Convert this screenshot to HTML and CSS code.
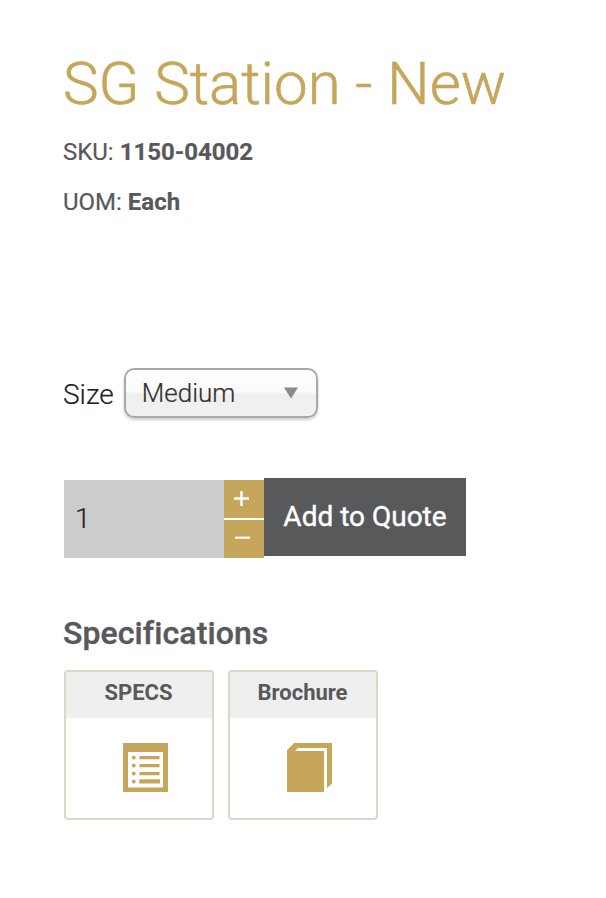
FILE: index.html
```html
<!DOCTYPE html>
<html lang="en">
<head>
    <meta charset="UTF-8">
    <meta name="viewport" content="width=device-width, initial-scale=1.0">
    <title>SG Station - New</title>
    <link rel="stylesheet" href="styles.css">
</head>
<body>

    <div class="product">
        <h1 class="product-title">SG Station - New</h1>
        <p class="product-info">SKU: <strong>1150-04002</strong></p>
        <p class="product-info">UOM: <strong>Each</strong></p>

        <!-- Size option -->
        <div class="option-row">
            <label for="size">Size</label>
            <div class="select-wrap">
                <select id="size" name="size">
                    <option value="medium">Medium</option>
                </select>
                <svg class="select-arrow" width="16" height="12" viewBox="0 0 16 12"><path d="M1 0.5H15L8 11.5Z" fill="#8a8a8a"/></svg>
            </div>
        </div>

        <!-- Quantity and quote button -->
        <form class="quote-form">
            <input class="quantity" type="text" name="quantity" value="1" aria-label="Quantity">
            <div class="steps">
                <button class="step step-up" type="button" aria-label="Increase">
                    <svg width="40" height="38" viewBox="0 0 40 38"><path d="M10 18.5H25M17.5 11V26" stroke="#fff" stroke-width="2.4"/></svg>
                </button>
                <button class="step" type="button" aria-label="Decrease">
                    <svg width="40" height="38" viewBox="0 0 40 38"><path d="M11 17.7H26" stroke="#fff" stroke-width="2.2"/></svg>
                </button>
            </div>
            <button class="add-button" type="submit">Add to Quote</button>
        </form>

        <h2 class="spec-title">Specifications</h2>
        <div class="cards">
            <a class="card">
                <span class="card-label">SPECS</span>
                <svg class="card-icon" width="45" height="49" viewBox="0 0 45 49">
                    <path fill="#c6a65a" fill-rule="evenodd" d="M0 0H45V49H0ZM5 9V44.4H40V9Z"/>
                    <path fill="#c6a65a" d="M9 13h3.5v3.2H9zM9 21h3.5v3.2H9zM9 29h3.5v3.2H9zM9 37h3.5v3.2H9zM16.5 13h20v3.3h-20zM16.5 21h20v3.3h-20zM16.5 29h20v3.3h-20zM16.2 36.2h20.8v4.3h-20.8z"/>
                </svg>
            </a>
            <a class="card">
                <span class="card-label">Brochure</span>
                <svg class="card-icon" width="45" height="49" viewBox="0 0 45 49">
                    <path fill="#c6a65a" d="M0 7.3L7 0H45V40.5L40 45V5H11L8 8H37V49H0Z"/>
                </svg>
            </a>
        </div>
    </div>

</body>
</html>
```

FILE: styles.css
```css
body {
    margin: 0;
    background-color: #fff;
    font-family: Roboto, Arial, sans-serif;
    color: #58595b;
}
.product {
    padding: 47px 64px 0;
}
.product-title {
    margin: 0 0 7px -1px;
    font-size: 60px;
    font-weight: 300;
    line-height: 73px;
    color: #c6a65a; /* Gold */
    white-space: nowrap;
    -webkit-text-stroke: 0.6px #c6a65a;
}
.product-info {
    margin: 0 0 0 -1px;
    font-size: 24px;
    line-height: 50px;
    -webkit-text-stroke: 0.2px #58595b;
}
.option-row {
    display: flex;
    align-items: center;
    gap: 10px;
    margin: 141px 0 0 -1px;
    height: 50px;
    font-size: 28px;
    font-weight: 300;
    color: #222;
    -webkit-text-stroke: 0.2px #222;
}
.option-row label {
    padding-top: 2px;
}
.select-wrap {
    display: grid;
    align-items: center;
    width: 194px;
}
.select-wrap select,
.select-arrow {
    grid-area: 1 / 1;
}
.select-wrap select {
    appearance: none;
    box-sizing: border-box;
    width: 194px;
    height: 50px;
    padding: 0 16px;
    border: 2px solid #a9a9a9;
    border-radius: 10px;
    background: linear-gradient(#fff 0%, #fafafa 48%, #efefef 52%, #f1f1f1 100%);
    box-shadow: 0 2px 3px rgba(0, 0, 0, 0.2);
    font-family: inherit;
    font-size: 26px;
    font-weight: 300;
    color: #333;
}
.select-arrow {
    justify-self: end;
    margin-right: 19px;
    pointer-events: none;
}
.quote-form {
    display: flex;
    align-items: flex-start;
    margin: 60px 0 0;
}
.quantity {
    box-sizing: border-box;
    width: 160px;
    height: 78px;
    margin: 2px 0 0;
    padding: 0 11px 2px;
    border: none;
    border-radius: 0;
    background-color: #ccc;
    font-family: inherit;
    font-size: 28px;
    font-weight: 300;
    color: #222;
    -webkit-text-stroke: 0.2px #222;
}
.steps {
    display: flex;
    flex-direction: column;
    gap: 2px;
    margin-top: 2px;
}
.step {
    width: 40px;
    height: 38px;
    padding: 0;
    border: none;
    background-color: #c6a65a;
    cursor: pointer;
}
.step svg {
    display: block;
}
.add-button {
    width: 202px;
    height: 78px;
    padding: 0 0 2px;
    border: none;
    background-color: #58595b;
    font-family: inherit;
    font-size: 28px;
    color: #fff;
    cursor: pointer;
    -webkit-text-stroke: 0.4px #fff;
}
.spec-title {
    margin: 55px 0 17px -1px;
    font-size: 32px;
    font-weight: 500;
    line-height: 40px;
    letter-spacing: 0.1px;
    -webkit-text-stroke: 0.4px #58595b;
}
.cards {
    display: flex;
    gap: 14px;
}
.card {
    display: flex;
    flex-direction: column;
    align-items: center;
    box-sizing: border-box;
    width: 150px;
    height: 150px;
    border: 2px solid #dcd7c7;
    border-radius: 4px;
}
.card-label {
    align-self: stretch;
    height: 46px;
    padding-right: 1px;
    background-color: #efefef;
    font-size: 22px;
    font-weight: 700;
    line-height: 41px;
    text-align: center;
}
.card-icon {
    margin: 25px 0 0 13px;
}
```
